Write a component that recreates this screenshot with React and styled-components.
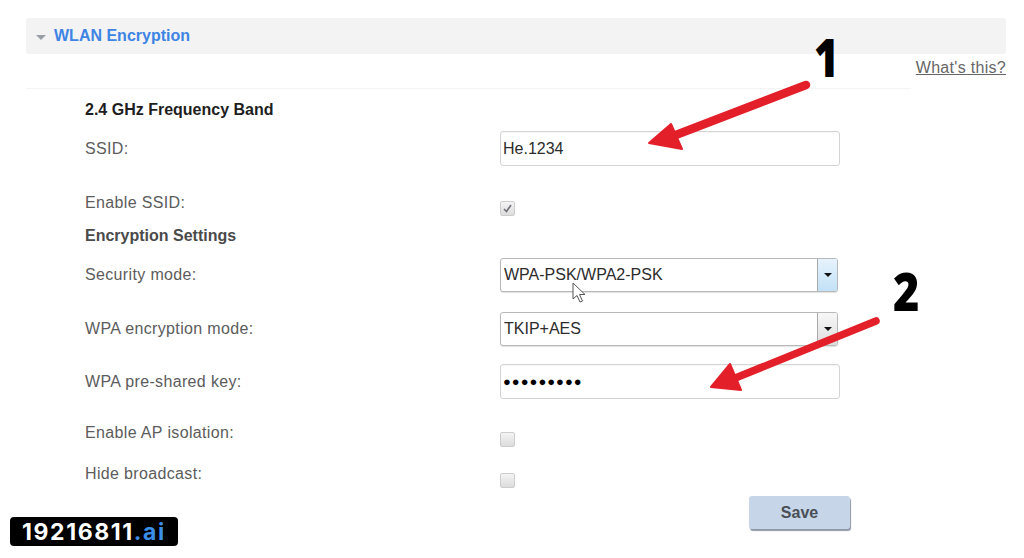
import React from "react";
import styled, { createGlobalStyle } from "styled-components";

const GlobalStyle = createGlobalStyle`
  *, *:before, *:after { box-sizing: border-box; }
  body {
    margin: 0;
    background: #fff;
    font-family: "Liberation Sans", Arial, sans-serif;
  }
`;

const Page = styled.div`
  position: relative;
  width: 1024px;
  height: 558px;
  overflow: hidden;
  padding: 18px 18px 0 26px;
  background: #fff;
`;

const Header = styled.div`
  display: flex;
  align-items: center;
  gap: 8px;
  height: 36px;
  padding-left: 10px;
  background: #f3f3f4;
  border-radius: 3px;
`;

const Caret = styled.span`
  width: 0;
  height: 0;
  margin-top: 3px;
  border-left: 5px solid transparent;
  border-right: 5px solid transparent;
  border-top: 5px solid #9a9fa6;
`;

const HeaderTitle = styled.span`
  font-size: 16px;
  font-weight: bold;
  color: #3d84e3;
`;

const HelpRow = styled.div`
  display: flex;
  justify-content: flex-end;
  height: 26px;
  padding-top: 5px;
`;

const HelpLink = styled.a`
  font-size: 16px;
  letter-spacing: 0.3px;
  color: #666;
  text-decoration: underline;
`;

const Divider = styled.div`
  height: 1px;
  width: 885px;
  margin-top: ${(p) => p.$top}px;
  background: #f4f4f4;
`;

const Form = styled.div`
  display: flex;
  flex-direction: column;
  padding-left: 59px;
`;

const Row = styled.div`
  display: grid;
  grid-template-columns: 415px 340px 1fr;
  align-items: ${(p) => (p.$top ? "start" : "center")};
  margin-top: ${(p) => p.$gap || 0}px;
  min-height: ${(p) => p.$h || 20}px;
`;

const Label = styled.div`
  font-size: 16px;
  line-height: 20px;
  letter-spacing: 0.35px;
  color: #5c5c5c;
`;

const SectionTitle = styled.div`
  font-size: 16px;
  line-height: 20px;
  font-weight: bold;
  color: ${(p) => (p.$dark ? "#1e1e1e" : "#4a4a4a")};
`;

const TextBox = styled.div`
  display: flex;
  align-items: center;
  height: 35px;
  width: 340px;
  padding-left: 2px;
  border: 1px solid #d4d4d4;
  border-radius: 3px;
  background: #fff;
  font-size: 16px;
  color: #2c2c2c;
  box-shadow: inset 0 1px 1px rgba(0, 0, 0, 0.04);
`;

const Dots = styled.span`
  font-size: 13px;
  letter-spacing: 1px;
  color: #000;
`;

const Select = styled.div`
  display: flex;
  align-items: stretch;
  height: 34px;
  width: 338px;
  border: 1px solid #b9b9b9;
  border-radius: 3px;
  box-shadow: 0 1px 1px rgba(0, 0, 0, 0.12);
  background: #fff;
  overflow: hidden;
`;

const SelectValue = styled.div`
  flex: 1;
  display: flex;
  align-items: center;
  padding-left: 3px;
  font-size: 16px;
  color: #2c2c2c;
`;

const DropButton = styled.div`
  width: 20px;
  display: flex;
  align-items: center;
  justify-content: center;
  border-left: 1px solid #a9a9a9;
  background: ${(p) =>
    p.$hover
      ? "linear-gradient(#e6f3fc, #c2e1f6)"
      : "linear-gradient(#f7f7f7, #dedede)"};
`;

const DropArrow = styled.span`
  width: 0;
  height: 0;
  border-left: 4px solid transparent;
  border-right: 4px solid transparent;
  border-top: 4px solid #111;
`;

const Check = styled.div`
  width: 15px;
  height: 15px;
  margin-top: ${(p) => p.$top || 0}px;
  border: 1px solid #cdcdcd;
  border-radius: 2px;
  background: linear-gradient(#f4f4f4, #dcdcdc);
  display: flex;
  align-items: center;
  justify-content: center;
`;

const SaveRow = styled.div`
  display: flex;
  justify-content: flex-end;
  width: 765px;
  margin-top: 8px;
`;

const SaveButton = styled.div`
  width: 101px;
  height: 33px;
  display: flex;
  align-items: center;
  justify-content: center;
  border-radius: 3px;
  background: #c6d6e8;
  box-shadow: 1px 2px 1px #8f99a5;
  font-size: 16px;
  font-weight: bold;
  color: #4a4f57;
`;

const Badge = styled.div`
  position: absolute;
  left: 10px;
  top: 517px;
  height: 29px;
  padding: 0 12px 0 12px;
  display: flex;
  align-items: center;
  border-radius: 4px;
  background: #000;
  font-family: Inter, "Liberation Sans", sans-serif;
  font-weight: 700;
  font-size: 23px;
  letter-spacing: 1.6px;
  color: #fff;
`;

const BadgeTld = styled.span`
  color: #3b8fe8;
`;

const Step = styled.div`
  position: absolute;
  left: ${(p) => p.$x}px;
  top: ${(p) => p.$y}px;
  font-family: "Open Sans", "DejaVu Sans", sans-serif;
  font-weight: 800;
  font-size: 53px;
  line-height: 53px;
  color: #000;
  transform: scaleX(${(p) => p.$sx});
  transform-origin: left top;
`;

const Overlay = styled.svg`
  position: absolute;
  left: 0;
  top: 0;
  pointer-events: none;
`;

const CheckMark = () => (
  <svg width="11" height="11" viewBox="0 0 11 11">
    <path d="M2 6 L4.5 8.5 L9 2" fill="none" stroke="#6f6f78" strokeWidth="1.6" />
  </svg>
);

export default function App() {
  return (
    <>
      <GlobalStyle />
      <Page>
        <Header>
          <Caret />
          <HeaderTitle>WLAN Encryption</HeaderTitle>
        </Header>
        <HelpRow>
          <HelpLink>What's this?</HelpLink>
        </HelpRow>
        <Divider $top={8} />
        <Form>
          <Row $gap={11}>
            <SectionTitle $dark>2.4 GHz Frequency Band</SectionTitle>
          </Row>
          <Row $gap={11} $h={35}>
            <Label>SSID:</Label>
            <TextBox>He.1234</TextBox>
          </Row>
          <Row $gap={27} $top $h={26}>
            <Label>Enable SSID:</Label>
            <Check $top={8}>
              <CheckMark />
            </Check>
          </Row>
          <Row $gap={7}>
            <SectionTitle>Encryption Settings</SectionTitle>
          </Row>
          <Row $gap={12} $h={34}>
            <Label>Security mode:</Label>
            <Select>
              <SelectValue>WPA-PSK/WPA2-PSK</SelectValue>
              <DropButton $hover>
                <DropArrow />
              </DropButton>
            </Select>
          </Row>
          <Row $gap={20} $h={34}>
            <Label>WPA encryption mode:</Label>
            <Select>
              <SelectValue>TKIP+AES</SelectValue>
              <DropButton>
                <DropArrow />
              </DropButton>
            </Select>
          </Row>
          <Row $gap={18} $h={35}>
            <Label>WPA pre-shared key:</Label>
            <TextBox>
              <Dots>●●●●●●●●●</Dots>
            </TextBox>
          </Row>
          <Row $gap={24} $top $h={23}>
            <Label>Enable AP isolation:</Label>
            <Check $top={9} />
          </Row>
          <Row $gap={17} $top $h={23}>
            <Label>Hide broadcast:</Label>
            <Check $top={9} />
          </Row>
          <SaveRow>
            <SaveButton>Save</SaveButton>
          </SaveRow>
        </Form>

        <Step $x={814} $y={30} $sx={0.8}>1</Step>
        <Step $x={893} $y={264} $sx={0.85}>2</Step>

        <Overlay width="1024" height="558" viewBox="0 0 1024 558">
          <g fill="#e3202a" stroke="#e3202a" strokeLinejoin="round">
            <line x1="806" y1="85" x2="668" y2="138" strokeWidth="8.5" strokeLinecap="round" />
            <polygon points="649,143 671,124 682,149" strokeWidth="2" />
            <line x1="876" y1="321" x2="728" y2="381" strokeWidth="7.5" strokeLinecap="round" />
            <polygon points="711,387 730,364 741,390" strokeWidth="2" />
          </g>
          <path
            d="M573 283 L573 299 L577 295.5 L580 302 L582.5 301 L579.5 294.5 L585 294.5 Z"
            fill="#fff"
            stroke="#555"
            strokeWidth="1"
            strokeLinejoin="round"
          />
        </Overlay>

        <Badge>
          19216811<BadgeTld>.ai</BadgeTld>
        </Badge>
      </Page>
    </>
  );
}
